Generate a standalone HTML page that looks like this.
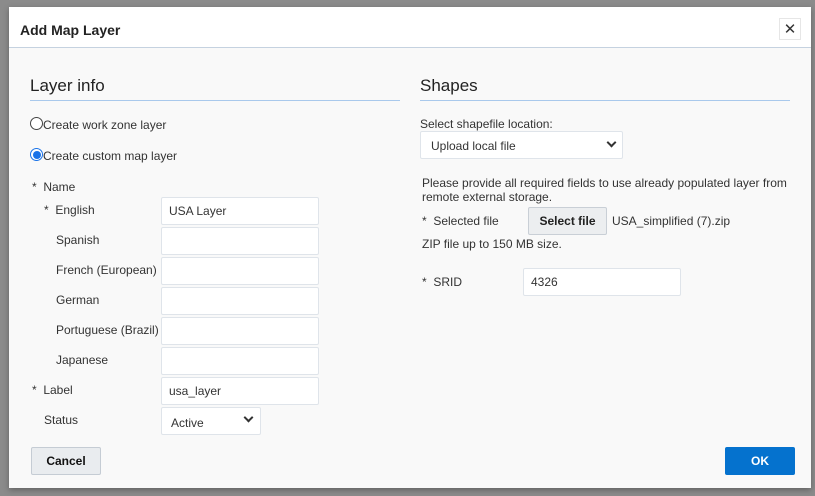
<!DOCTYPE html>
<html><head><meta charset="utf-8"><style>
*{box-sizing:border-box;margin:0;padding:0}
body{width:815px;height:496px;background:#8b8b8b;font-family:"Liberation Sans",Arial,sans-serif;font-size:12px;color:#333;position:relative;overflow:hidden}
.a{position:absolute}
#dlg{left:9px;top:7px;width:802px;height:481px;background:#f9f9f9;box-shadow:0 2px 6px rgba(0,0,0,.3)}
#hdr{left:0;top:0;width:802px;height:41px;background:#fff;border-bottom:1px solid #c5d2e0}
.inp{position:absolute;background:#fff;border:1px solid #dfe4ea;border-radius:2px;height:28px;padding:6px 7px;font-size:12px;color:#333}
.lbl{position:absolute;font-size:12px;color:#333}
.h2{position:absolute;font-size:17px;color:#222}
.line{position:absolute;height:1px;background:#a9c9ec}
.chev{position:absolute;width:7px;height:7px;border-right:2px solid #333;border-bottom:2px solid #333;transform:rotate(45deg)}
</style></head><body>
<div class="a" id="dlg">
<div class="a" id="hdr">
<div class="a" style="left:11px;top:15px;font-size:14px;font-weight:bold;color:#222">Add Map Layer</div>
<div class="a" style="left:770px;top:11px;width:22px;height:22px;background:#fff;border:1px solid #e6e6e6;text-align:center;font-size:15px;line-height:20px;font-weight:bold;color:#333;font-family:'DejaVu Sans',sans-serif">✕</div>
</div>
</div>
<div class="h2" style="left:30px;top:76px">Layer info</div>
<div class="line" style="left:30px;top:100px;width:370px"></div>
<div class="a" style="left:30px;top:117px;width:13px;height:13px;border:1px solid #444;border-radius:50%;background:#fff"></div>
<div class="lbl" style="left:43px;top:118px">Create work zone layer</div>
<div class="a" style="left:30px;top:148px;width:13px;height:13px;border:1px solid #1a73e8;border-radius:50%;background:#fff"><div class="a" style="left:1.5px;top:1.5px;width:8px;height:8px;border-radius:50%;background:#1a73e8"></div></div>
<div class="lbl" style="left:43px;top:149px">Create custom map layer</div>
<div class="lbl" style="left:32px;top:180px">*&nbsp;&nbsp;Name</div>
<div class="lbl" style="left:44px;top:203px">*&nbsp;&nbsp;English</div>
<div class="lbl" style="left:56px;top:233px">Spanish</div>
<div class="lbl" style="left:56px;top:263px">French (European)</div>
<div class="lbl" style="left:56px;top:293px">German</div>
<div class="lbl" style="left:56px;top:323px">Portuguese (Brazil)</div>
<div class="lbl" style="left:56px;top:353px">Japanese</div>
<div class="lbl" style="left:32px;top:383px">*&nbsp;&nbsp;Label</div>
<div class="lbl" style="left:44px;top:413px">Status</div>
<div class="inp" style="left:161px;top:197px;width:158px">USA Layer</div>
<div class="inp" style="left:161px;top:227px;width:158px"></div>
<div class="inp" style="left:161px;top:257px;width:158px"></div>
<div class="inp" style="left:161px;top:287px;width:158px"></div>
<div class="inp" style="left:161px;top:317px;width:158px"></div>
<div class="inp" style="left:161px;top:347px;width:158px"></div>
<div class="inp" style="left:161px;top:377px;width:158px">usa_layer</div>
<div class="inp" style="left:161px;top:407px;width:100px;padding-left:9px;padding-top:8px">Active</div>
<div class="chev" style="left:245px;top:414px"></div>

<div class="h2" style="left:420px;top:76px">Shapes</div>
<div class="line" style="left:420px;top:100px;width:370px"></div>
<div class="lbl" style="left:420px;top:117px">Select shapefile location:</div>
<div class="inp" style="left:420px;top:131px;width:203px;height:28px;padding-left:10px;padding-top:7px">Upload local file</div>
<div class="chev" style="left:608px;top:139px"></div>
<div class="lbl" style="left:422px;top:176px;line-height:14px;width:380px">Please provide all required fields to use already populated layer from remote external storage.</div>
<div class="lbl" style="left:422px;top:214px">*&nbsp;&nbsp;Selected file</div>
<div class="a" style="left:528px;top:207px;width:79px;height:28px;background:#eceef0;border:1px solid #c9cfd6;border-radius:2px;font-weight:bold;text-align:center;line-height:26px;color:#222">Select file</div>
<div class="lbl" style="left:612px;top:214px">USA_simplified (7).zip</div>
<div class="lbl" style="left:422px;top:237px">ZIP file up to 150 MB size.</div>
<div class="lbl" style="left:422px;top:275px">*&nbsp;&nbsp;SRID</div>
<div class="inp" style="left:523px;top:268px;width:158px">4326</div>

<div class="a" style="left:31px;top:447px;width:70px;height:28px;background:#e9ecef;border:1px solid #c5ccd4;border-radius:2px;text-align:center;line-height:26px;font-weight:bold;color:#111">Cancel</div>
<div class="a" style="left:725px;top:447px;width:70px;height:28px;background:#0572ce;border-radius:2px;text-align:center;line-height:28px;font-weight:bold;color:#fff">OK</div>
</body></html>
